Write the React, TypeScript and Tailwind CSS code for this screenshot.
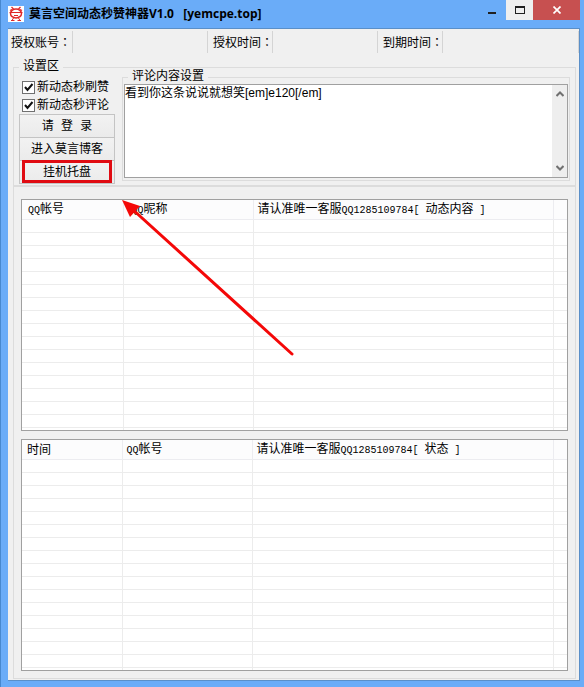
import type { ReactNode } from "react";

type Column = { label: ReactNode; className: string };

function Latin({ children }: { children: ReactNode }) {
  return <span className="whitespace-pre text-[10px]">{children}</span>;
}

const accounts: Column[] = [
  { label: <><Latin>QQ</Latin>帐号</>, className: "w-[101px] pl-1.5" },
  { label: <><Latin>QQ</Latin>昵称</>, className: "w-[130px] pl-2" },
  {
    label: <>请认准唯一客服<Latin>QQ1285109784[ </Latin>动态内容<Latin> ]</Latin></>,
    className: "pl-1",
  },
];

const logs: Column[] = [
  { label: "时间", className: "w-[100px] pl-[5px]" },
  { label: <><Latin>QQ</Latin>帐号</>, className: "w-[130px] pl-1" },
  {
    label: <>请认准唯一客服<Latin>QQ1285109784[ </Latin>状态<Latin> ]</Latin></>,
    className: "pl-1",
  },
];

function TitleBar() {
  return (
    <header className="flex h-7 items-start">
      <div className="flex h-7 flex-1 items-center">
        <svg viewBox="0 0 16 16" className="size-4 bg-white" fill="none" stroke="#e02828">
          <path d="M3.5 1 5.5 3M12.5 1 10.5 3M2 4.5 4 3.5M14 4.5 12 3.5" strokeWidth="1.3" />
          <ellipse cx="8" cy="7.5" rx="5.5" ry="4.5" strokeWidth="1.5" />
          <path d="M1.5 6.5H14.5M6 9.5H10M5.5 12 4 14.5M10.5 12 12 14.5M3 14.5H6.5M9.5 14.5H13" />
        </svg>
        <h1 className="ml-[5px] whitespace-pre font-['Open_Sans','Noto_Sans_CJK_SC',sans-serif] text-[12px] font-bold">
          莫言空间动态秒赞神器V1.0{"   "}[yemcpe.top]
        </h1>
      </div>
      <button aria-label="最小化" className="flex h-5 w-7 items-center justify-center">
        <span className="mt-1.5 h-0.5 w-2 bg-[#202020]" />
      </button>
      <button aria-label="最大化" className="flex h-5 w-[27px] items-center justify-center bg-[#efefef]">
        <span className="h-2 w-2.5 border border-t-2 border-[#202020]" />
      </button>
      <button aria-label="关闭" className="flex h-5 w-[47px] items-center justify-center bg-[#c75050]">
        <svg viewBox="0 0 8 8" className="size-2" stroke="white" strokeWidth="1.7">
          <path d="M.5.5 7.5 7.5M7.5.5.5 7.5" />
        </svg>
      </button>
    </header>
  );
}

function StatusCell({ children, className }: { children?: ReactNode; className: string }) {
  return <div className={`h-[22px] border-r border-[#d4d4d4] leading-[22px] ${className}`}>{children}</div>;
}

function StatusBar() {
  return (
    <div
      lang="ja"
      className="flex overflow-hidden whitespace-nowrap pt-0.5 font-['Noto_Sans_CJK_JP','Noto_Sans_CJK_SC',sans-serif] text-[12px]"
    >
      <StatusCell className="w-[65px] pl-[3px]">授权账号：</StatusCell>
      <StatusCell className="w-[135px]" />
      <StatusCell className="w-[65px] pl-[5px]">授权时间：</StatusCell>
      <StatusCell className="w-[105px]" />
      <StatusCell className="w-[65px] pl-[5px]">到期时间：</StatusCell>
      <StatusCell className="flex-1" />
    </div>
  );
}

function Check({ label }: { label: string }) {
  return (
    <label className="flex h-[18px] items-center gap-0.5 whitespace-nowrap">
      <span className="grid size-[13px] place-items-center border border-[#707070] bg-white">
        <input type="checkbox" defaultChecked className="peer col-start-1 row-start-1 size-[11px] appearance-none" />
        <svg
          viewBox="0 0 11 11"
          className="pointer-events-none invisible col-start-1 row-start-1 size-[11px] peer-checked:visible"
          fill="none"
          stroke="#111"
          strokeWidth="2"
        >
          <path d="M2 5 4.5 8 9.5 2" />
        </svg>
      </span>
      <span className="pt-0.5">{label}</span>
    </label>
  );
}

function PushButton({ children }: { children: ReactNode }) {
  return (
    <button className="h-[23px] w-full border border-b-0 border-[#c4c4c4] bg-linear-to-b from-[#f2f2f2] to-[#ebebeb] pt-0.5">
      {children}
    </button>
  );
}

function Settings() {
  return (
    <fieldset className="flex min-w-0 items-start border border-[#dcdcdc] pr-[5px] pb-px pl-[5px]">
      <legend className="px-1 leading-[14px]">设置区</legend>
      <div className="w-24 shrink-0 pt-1">
        <div className="pl-[3px]">
          <Check label="新动态秒刷赞" />
          <Check label="新动态秒评论" />
        </div>
        <div className="relative border-b border-[#c4c4c4]">
          <PushButton>请 登 录</PushButton>
          <PushButton>进入莫言博客</PushButton>
          <PushButton>挂机托盘</PushButton>
          <span className="pointer-events-none absolute inset-x-[3px] bottom-0 h-[23px] border-3 border-[#e00b12]" />
        </div>
      </div>
      <fieldset className="-mt-[3px] ml-[7px] min-w-0 flex-1 border border-[#dcdcdc] px-px pb-0.5">
        <legend className="ml-1 px-1 leading-[13px]">
          <label htmlFor="comment">评论内容设置</label>
        </legend>
        <div className="flex h-[94px] border border-[#a0a0a0] bg-white">
          <textarea
            id="comment"
            defaultValue="看到你这条说说就想笑[em]e120[/em]"
            className="min-w-0 flex-1 resize-none overflow-hidden font-['Liberation_Sans','Noto_Sans_CJK_SC',sans-serif] leading-[16px] outline-none"
          />
          <div className="flex w-[15px] flex-col items-center justify-between bg-[#eee] py-1.5">
            <svg viewBox="0 0 8 6" className="h-1.5 w-2" fill="none" stroke="#707070" strokeWidth="2">
              <path d="M.5 5 4 1.5 7.5 5" />
            </svg>
            <svg viewBox="0 0 8 6" className="h-1.5 w-2" fill="none" stroke="#707070" strokeWidth="2">
              <path d="M.5 1 4 4.5 7.5 1" />
            </svg>
          </div>
        </div>
      </fieldset>
    </fieldset>
  );
}

function ListView({ columns, rows }: { columns: Column[]; rows: number }) {
  return (
    <div className="h-[232px] overflow-hidden border border-[#a0a0a0] bg-white">
      <table className="w-full table-fixed border-collapse">
        <thead>
          <tr className="h-[18px] bg-[#fcfcfd]">
            {columns.map((column, i) => (
              <th
                key={i}
                className={`whitespace-nowrap border-r border-b border-[#ececf0] pt-0.5 pb-0 text-left leading-[16px] font-normal ${column.className}`}
              >
                {column.label}
              </th>
            ))}
            <th className="w-[14px] border-b border-[#ececf0] p-0" />
          </tr>
        </thead>
        <tbody>
          {Array.from({ length: rows }, (_, row) => (
            <tr key={row} className="h-[13px]">
              {columns.map((_, i) => (
                <td key={i} className="border-r border-b border-[#ececec] p-0" />
              ))}
              <td className="border-b border-[#ececec] p-0" />
            </tr>
          ))}
        </tbody>
      </table>
    </div>
  );
}

export default function App() {
  return (
    <div className="min-h-screen border-l border-[#4788cf] bg-[#6aacf8] pr-1 pb-[5px] pl-[7px] font-['Liberation_Mono','Noto_Sans_CJK_SC',monospace] text-[12px] text-black">
      <TitleBar />
      <main className="border-t border-r border-b border-[#5a8fc8] bg-[#f0f0f0] pb-px">
        <StatusBar />
        <div className="mt-[7px] mr-[3px] ml-[5px]">
          <Settings />
          <div className="relative flex flex-col gap-2 border border-[#dcdcdc] px-[7px] pt-3 pb-[7px]">
            <ListView columns={accounts} rows={17} />
            <ListView columns={logs} rows={17} />
            <svg
              viewBox="0 0 172 157"
              className="pointer-events-none absolute top-3 left-[108px] h-[157px] w-[172px]"
              fill="#f40808"
            >
              <path d="M9 9 170 155" stroke="#f40808" strokeWidth="3" strokeLinecap="round" />
              <path d="M0 1 18 7 8 18Z" />
            </svg>
          </div>
        </div>
      </main>
    </div>
  );
}
